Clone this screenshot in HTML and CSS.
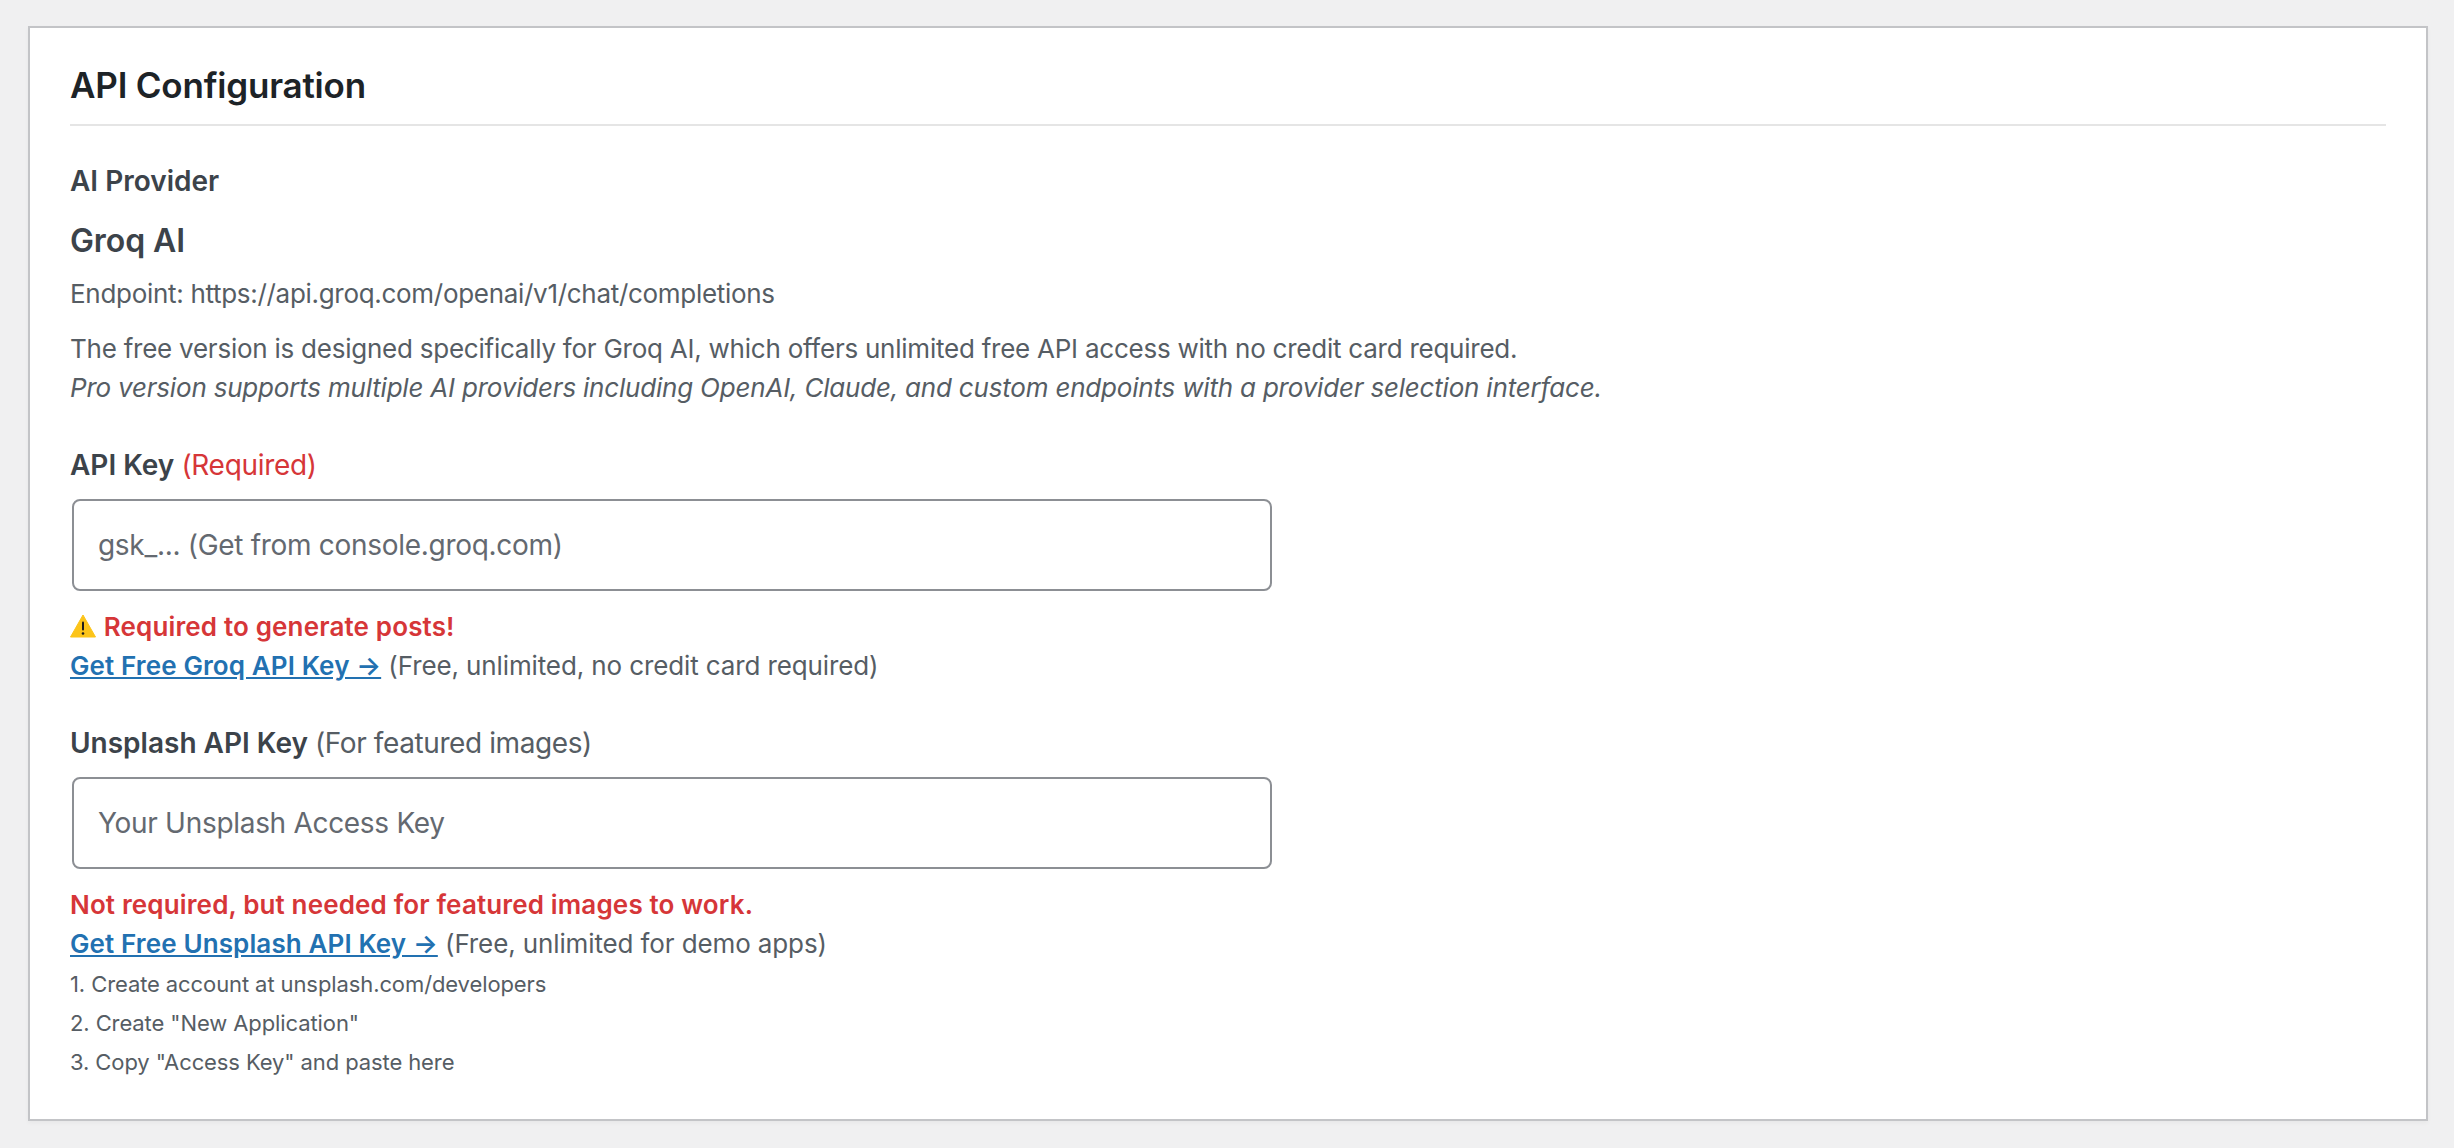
FILE: index.html
```html
<!DOCTYPE html>
<html lang="en">

<head>
  <meta charset="UTF-8" />
  <title>API Configuration</title>
  <link rel="stylesheet" href="styles.css">
</head>

<body>
  <div class="card">
    <h2 class="card-title">API Configuration</h2>

    <div class="provider">
      <div class="field-label">AI Provider</div>
      <h3 class="provider-name">Groq AI</h3>
      <p class="endpoint">Endpoint: https://api.groq.com/openai/v1/chat/completions</p>
      <p class="provider-note">
        The free version is designed specifically for Groq AI, which offers unlimited free API access with no credit card required.<br>
        <em>Pro version supports multiple AI providers including OpenAI, Claude, and custom endpoints with a provider selection interface.</em>
      </p>
    </div>

    <div class="field">
      <label class="field-label" for="groq-key">API Key <span class="required">(Required)</span></label>
      <input class="text-input" id="groq-key" type="text" placeholder="gsk_... (Get from console.groq.com)">
      <p class="field-help">
        <strong class="required">
          <svg class="warn-icon" viewBox="0 0 26 24" aria-hidden="true">
            <path d="M13 1 L25.5 23 H.5 Z" fill="#fcc419" stroke="#fcc419" stroke-linejoin="round" stroke-width="1" />
            <rect x="12" y="7.5" width="2" height="9" rx="1" fill="#1c1c1c" />
            <circle cx="13" cy="19.5" r="1.3" fill="#1c1c1c" />
          </svg>
          Required to generate posts!
        </strong><br>
        <a class="key-link" href="#">Get Free Groq API Key →</a> (Free, unlimited, no credit card required)
      </p>
    </div>

    <div class="field">
      <label class="field-label" for="unsplash-key">Unsplash API Key <span class="label-note">(For featured images)</span></label>
      <input class="text-input" id="unsplash-key" type="text" placeholder="Your Unsplash Access Key">
      <p class="field-help">
        <strong class="required">Not required, but needed for featured images to work.</strong><br>
        <a class="key-link" href="#">Get Free Unsplash API Key →</a> (Free, unlimited for demo apps)
      </p>
      <ol class="steps">
        <li>1. Create account at unsplash.com/developers</li>
        <li>2. Create "New Application"</li>
        <li>3. Copy "Access Key" and paste here</li>
      </ol>
    </div>
  </div>
</body>

</html>
```

FILE: styles.css
```css
body {
  margin: 0;
  padding: 26px 26px 26px 28px;
  background: #f0f0f1;
  color: #565d64;
  font-family: Inter, "Noto Sans", sans-serif;
  font-size: 26px;
  line-height: 39px;
}

.card {
  padding: 0 40px 37px 40px;
  background: #fff;
  border: 2px solid #c3c4c7;
  box-shadow: 0 2px 4px rgba(0, 0, 0, .04);
}

.card-title {
  margin: 0;
  padding: 35px 0 17px;
  border-bottom: 2px solid #e5e5e5;
  color: #1d2327;
  font-size: 35px;
  font-weight: 600;
  line-height: 44px;
  letter-spacing: -.2px;
}

.provider {
  margin-top: 35px;
}

.field-label {
  display: block;
  color: #3c434a;
  font-size: 28px;
  font-weight: 600;
  line-height: 40px;
}

.provider-name {
  margin: 20px 0 0;
  color: #3c434a;
  font-size: 32px;
  font-weight: 600;
  line-height: 40px;
  letter-spacing: -.1px;
}

.endpoint {
  margin: 13px 0 0;
  letter-spacing: -.3px;
}

.provider-note {
  margin: 16px 0 0;
  letter-spacing: -.24px;
}

.provider-note em {
  letter-spacing: -.2px;
}

.field {
  margin-top: 38px;
}

.required {
  color: #d63638;
  font-weight: 400;
  letter-spacing: -.3px;
}

.field-help .required {
  font-weight: 600;
  letter-spacing: .15px;
}

.label-note {
  color: #565d64;
  font-weight: 400;
  letter-spacing: -.4px;
}

.text-input {
  display: block;
  box-sizing: border-box;
  width: 1200px;
  height: 92px;
  margin: 14px 0 0 2px;
  padding: 0 24px;
  background: #fff;
  border: 2px solid #8c8f94;
  border-radius: 8px;
  color: #2c3338;
  font-family: inherit;
  font-size: 28px;
  letter-spacing: -.3px;
}

.text-input::placeholder {
  color: #646970;
  opacity: 1;
}

.field-help {
  margin: 16px 0 0;
  letter-spacing: -.12px;
}

.warn-icon {
  width: 26px;
  height: 24px;
  margin-right: 1px;
  vertical-align: -2px;
}

.key-link {
  color: #2271b1;
  font-weight: 600;
  letter-spacing: .12px;
}

.steps {
  margin: 2px 0 0;
  padding: 0;
  list-style: none;
  font-size: 22px;
  letter-spacing: -.1px;
}
```
